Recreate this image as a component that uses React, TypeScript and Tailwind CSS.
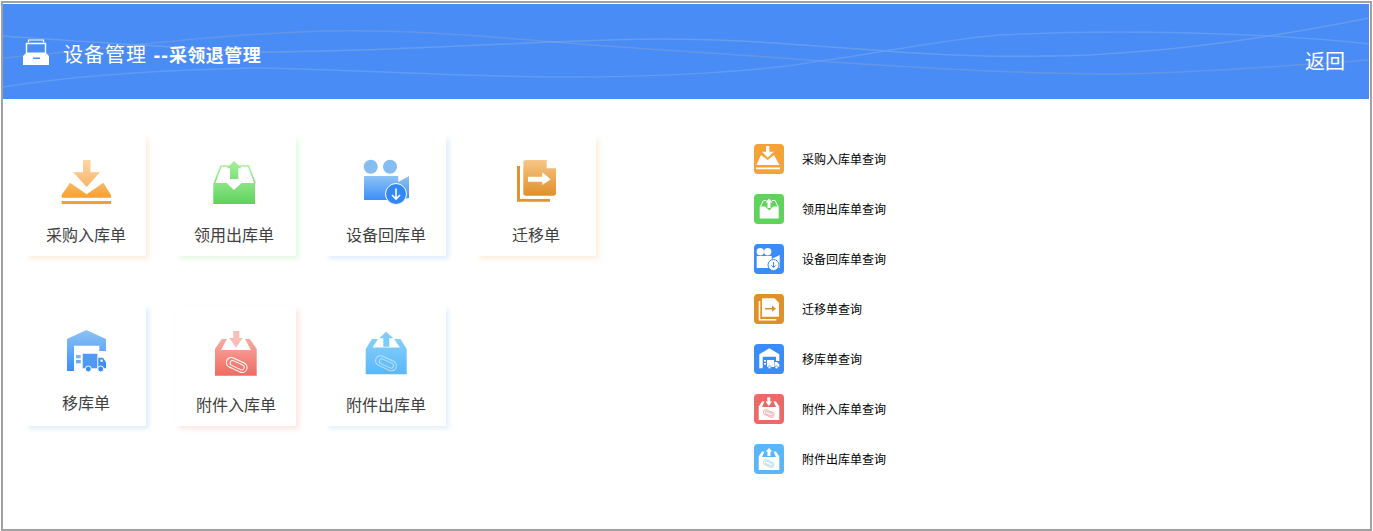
import type { ReactNode } from "react";

const cjk = "font-['Liberation_Sans','Noto_Sans_CJK_SC',sans-serif]";

function Grad({ id, from, to }: { id: string; from: string; to: string }) {
  return (
    <defs>
      <linearGradient id={id} x1="0" y1="0" x2="0" y2="1">
        <stop offset="0" stopColor={from} />
        <stop offset="1" stopColor={to} />
      </linearGradient>
    </defs>
  );
}

function Clip({ cx, cy, stroke = "#fff", w = 1, s = 1 }: { cx: number; cy: number; stroke?: string; w?: number; s?: number }) {
  return (
    <g transform={`rotate(25 ${cx} ${cy})`} fill="none" stroke={stroke} strokeWidth={w}>
      <rect x={cx - 11 * s} y={cy - 5 * s} width={22 * s} height={10 * s} rx={5 * s} />
      <rect x={cx - 7 * s} y={cy - 2.5 * s} width={15 * s} height={5 * s} rx={2.5 * s} />
    </g>
  );
}

function BigIcon({ box, children }: { box: string; children: ReactNode }) {
  return (
    <svg viewBox={box} className="w-16 h-14">
      {children}
    </svg>
  );
}

const bigIcons = {
  buy: (
    <BigIcon box="54 156 64 56">
      <Grad id="a1" from="#fdd6a6" to="#f8b568" />
      <Grad id="a2" from="#f9b763" to="#f5a033" />
      <path d="M83 160h7.5v12.3H100L86.7 187 73.3 172.3H83z" fill="url(#a1)" />
      <path d="M70 182.7l16.7 11.6 16.6-11.6 7.7 12.3v2.7H61.7V195z" fill="url(#a2)" />
      <rect x="61.7" y="201" width="49.3" height="3" fill="#f59f2e" />
    </BigIcon>
  ),
  use: (
    <BigIcon box="204 156 64 56">
      <Grad id="b1" from="#a8ee9c" to="#7fe07c" />
      <Grad id="b2" from="#8be484" to="#5ed25c" />
      <path d="M214.5 183l6.5-17h27.5l6.5 17" fill="none" stroke="url(#b1)" strokeWidth="1.6" />
      <path d="M234 161l7.7 7.3h-3.4V179h-8.3v-10.7h-3.3z" fill="url(#b1)" />
      <path d="M213.3 183h13.4l7.3 7 7.5-7H255v21h-41.7z" fill="url(#b2)" />
    </BigIcon>
  ),
  back: (
    <BigIcon box="354 156 64 56">
      <Grad id="c1" from="#8ec3f4" to="#3c8efb" />
      <circle cx="370.7" cy="166.7" r="7" fill="#85bdf3" />
      <circle cx="390" cy="166.7" r="7" fill="#85bdf3" />
      <path d="M364 176h34.3v6l10.7-6v22l-11 2h-34z" fill="url(#c1)" />
      <circle cx="396" cy="194" r="10.5" fill="#3288f5" stroke="#fff" strokeWidth="1" />
      <path d="M396 188.5v10M392 195l4 4 4-4" fill="none" stroke="#fff" strokeWidth="1.6" />
    </BigIcon>
  ),
  move: (
    <BigIcon box="504 156 64 56">
      <Grad id="d1" from="#f6c588" to="#e09029" />
      <path d="M517 166h3v33h30v2.7h-33z" fill="#e2952f" />
      <path d="M526 160h20.7l9.3 8.3V193a2.7 2.7 0 0 1-2.7 2.7H526a2.7 2.7 0 0 1-2.7-2.7V163a2.7 2.7 0 0 1 2.7-3z" fill="url(#d1)" />
      <path d="M546.7 160l9.3 8.3h-9.3z" fill="#fff" />
      <path d="M528 176.7h14.3v-4.4l8.4 7-8.4 5.7v-3.3H528z" fill="#fff" />
    </BigIcon>
  ),
  shift: (
    <BigIcon box="54 326 64 56">
      <Grad id="e1" from="#8ec3f4" to="#3c8efb" />
      <path d="M86.3 330L106 339v12h-6.7v-5.3H74V371h-7V339z" fill="url(#e1)" />
      <rect x="76" y="355" width="4.7" height="3.3" fill="#7db5f6" />
      <rect x="76" y="360" width="4.7" height="3.3" fill="#6aaaf7" />
      <rect x="82.7" y="353.7" width="14.6" height="14.6" rx="0.5" fill="#4f99f8" />
      <path d="M98.3 357.7h4.7l3 4.6v6h-7.7z" fill="#3c8efb" />
      <rect x="100.5" y="359.5" width="2.2" height="2.4" fill="#fff" />
      <circle cx="88.3" cy="369" r="3" fill="#3c8efb" stroke="#fff" strokeWidth="1" />
      <circle cx="100.7" cy="369" r="3" fill="#3c8efb" stroke="#fff" strokeWidth="1" />
    </BigIcon>
  ),
  partIn: (
    <BigIcon box="204 326 64 56">
      <Grad id="f1" from="#f9aaa2" to="#f06b60" />
      <path d="M233.3 331h6v7h3.4L236 347.7l-6.7-9.7h4z" fill="#fbbdb7" />
      <path d="M215 349l6.7-10h5.3l-6 11h30l-6-11h5l6.7 10v26.7H215z" fill="url(#f1)" />
      <Clip cx={236.7} cy={365} />
    </BigIcon>
  ),
  partOut: (
    <BigIcon box="354 326 64 56">
      <Grad id="g1" from="#85d0f8" to="#5ab6fb" />
      <path d="M386 331.7l7.3 6.6h-4v8.4h-6v-8.4h-4z" fill="#7fcdf7" />
      <path d="M365.7 349l6.3-10h6l-5.5 8.5H400l-6-8.5h6.5l6.2 10v25.3h-41z" fill="url(#g1)" />
      <Clip cx={386} cy={363.3} stroke="#b9e2fc" />
    </BigIcon>
  ),
};

const cards = [
  { label: "采购入库单", icon: bigIcons.buy, shadow: "shadow-[3px_3px_5px_#fdeedd]", text: "mt-3" },
  { label: "领用出库单", icon: bigIcons.use, shadow: "shadow-[3px_3px_5px_#e6f9e4]", text: "mt-3 pr-1" },
  { label: "设备回库单", icon: bigIcons.back, shadow: "shadow-[3px_3px_5px_#dfecfd]", text: "mt-3" },
  { label: "迁移单", icon: bigIcons.move, shadow: "shadow-[3px_3px_5px_#fdeedd]", text: "mt-3" },
  { label: "移库单", icon: bigIcons.shift, shadow: "shadow-[3px_3px_5px_#dfecfd]", text: "mt-2.5" },
  { label: "附件入库单", icon: bigIcons.partIn, shadow: "shadow-[3px_3px_5px_#fde6e4]", text: "mt-3" },
  { label: "附件出库单", icon: bigIcons.partOut, shadow: "shadow-[3px_3px_5px_#e3f1fb]", text: "mt-3" },
];

const links = [
  {
    label: "采购入库单查询",
    bg: "bg-[#f5a236]",
    glyph: (
      <g fill="#fff">
        <path d="M12 2h3.4v5.7h4.3L13.7 13.7 8 7.7h4z" />
        <path d="M7 11l6.7 5 6.3-5 5.5 10h-23z" />
        <rect x="2" y="23.5" width="24" height="1.8" />
      </g>
    ),
  },
  {
    label: "领用出库单查询",
    bg: "bg-[#5fd35a]",
    glyph: (
      <g fill="#fff">
        <path d="M6.5 12.5l3-6h3M24 12.5l-3-6h-3" fill="none" stroke="#fff" strokeWidth="1" />
        <path d="M15 4.5l3.5 4h-2V14h-3V8.5h-2z" />
        <path d="M5.7 12.5h5.5l4 4 4-4h5.5v12h-19z" />
      </g>
    ),
  },
  {
    label: "设备回库单查询",
    bg: "bg-[#3b8cfb]",
    glyph: (
      <g>
        <circle cx="6.3" cy="7.7" r="3.7" fill="#fff" />
        <circle cx="13.7" cy="7.7" r="3.7" fill="#fff" />
        <path d="M2.7 12h15v3l8-4v13h-23z" fill="#fff" />
        <circle cx="19.5" cy="21" r="5.5" fill="#fff" stroke="#3b8cfb" strokeWidth="1" />
        <path d="M19.5 18v5M17.5 21.5l2 2 2-2" fill="none" stroke="#3b8cfb" strokeWidth="1" />
      </g>
    ),
  },
  {
    label: "迁移单查询",
    bg: "bg-[#e09029]",
    glyph: (
      <g>
        <path d="M4.7 7h1.6v18h16v1.5H4.7z" fill="#fff" />
        <path d="M8 4.3h12.5l4.5 4.5v14H8z" fill="#fff" />
        <path d="M11 14h7v-2.5l4 3.2-4 3v-2.2h-7z" fill="#e09029" />
      </g>
    ),
  },
  {
    label: "移库单查询",
    bg: "bg-[#3b8cfb]",
    glyph: (
      <g>
        <path d="M15.3 4.3l10 6V17H22v-4.3H8.7V24.3H5.3V10.3z" fill="#fff" />
        <rect x="10" y="16" width="2" height="1.6" fill="#fff" />
        <rect x="10" y="19" width="2" height="1.6" fill="#fff" />
        <rect x="13" y="16" width="7" height="7" fill="#fff" />
        <path d="M20.5 18h2.5l2.3 2.5V23h-4.8z" fill="#fff" />
        <circle cx="15.5" cy="23.3" r="1.5" fill="#fff" stroke="#3b8cfb" strokeWidth="0.7" />
        <circle cx="22.5" cy="23.3" r="1.5" fill="#fff" stroke="#3b8cfb" strokeWidth="0.7" />
      </g>
    ),
  },
  {
    label: "附件入库单查询",
    bg: "bg-[#e96a66]",
    glyph: (
      <g>
        <path d="M13.3 3.3h3v4.2H18L14.8 12l-3.3-4.5h1.8z" fill="#fff" />
        <path d="M4.7 12.5l3.3-5h2.4L8 13h14l-2.5-5.5H22l3.3 5V26H4.7z" fill="#fff" />
        <Clip cx={14.7} cy={19.5} stroke="#f3b5b2" w={1} s={0.5} />
      </g>
    ),
  },
  {
    label: "附件出库单查询",
    bg: "bg-[#5ab6fb]",
    glyph: (
      <g>
        <path d="M15 4l3.2 3.5h-1.7V12h-3V7.5h-1.7z" fill="#fff" />
        <path d="M4.7 12.5l3.3-5h2.4L8 13h14l-2.5-5.5H22l3.3 5V26H4.7z" fill="#fff" />
        <Clip cx={14.7} cy={19.5} stroke="#b9e0fc" w={1} s={0.5} />
      </g>
    ),
  },
];

function Waves() {
  return (
    <svg viewBox="3 4 1367 95" preserveAspectRatio="none" className="absolute inset-0 w-full h-full" fill="none" strokeWidth="1.5">
      <path stroke="#8ea6d0" strokeOpacity="0.4" d="M3 58C100 50 200 35 323 31C400 29 480 36 556 42C650 50 740 54 820 61C920 68 1020 74 1120 74C1200 73 1300 65 1370 60" />
      <path stroke="#7faee8" strokeOpacity="0.5" d="M3 36C90 42 180 48 260 52C360 52 470 45 556 42C600 40 630 39 660 39C740 39 820 46 885 51C940 55 1000 57 1040 56C1090 56 1100 54 1120 53C1200 48 1290 34 1370 18" />
      <path stroke="#659ff2" strokeOpacity="0.8" d="M3 87C60 78 150 70 260 68C360 70 470 77 560 77C660 77 760 72 820 61C870 55 940 40 1000 35C1040 33 1080 32 1120 32C1200 32 1300 36 1370 44" />
    </svg>
  );
}

export default function App() {
  return (
    <div className={`h-screen bg-white px-px pt-px overflow-hidden ${cjk}`}>
      <div className="h-full border-2 border-neutral-400 pt-px pr-px">
        {/* Header */}
        <header className="relative h-24 bg-[#4a8cf5] border-b border-white text-white flex items-center justify-between pl-5 pr-6 pt-2">
          <Waves />
          <div className="relative flex items-center gap-3.5">
            <svg viewBox="0 0 26 26" className="w-6.5 h-6.5 -mt-2">
              <path d="M5.5 3.5V1h15v2.5" fill="none" stroke="#fff" strokeWidth="1.2" />
              <path d="M3.5 14V4.5h19V14" fill="none" stroke="#fff" strokeWidth="1.4" />
              <path d="M3.5 13.5h19L26 17v9H0v-9z M10 18.5v1.4h7v-1.4z" fill="#fff" fillRule="evenodd" />
            </svg>
            <h1 className="text-xl tracking-wider">
              设备管理 <span className="font-bold">--<span className="text-lg tracking-wide">采领退管理</span></span>
            </h1>
          </div>
          <a className="relative text-xl mt-3">返回</a>
        </header>

        <main className="flex pt-9">
          {/* Entry cards */}
          <div className="-ml-px pl-6 w-180 shrink-0">
            <div className="flex flex-wrap w-150 gap-x-7.5 gap-y-12.5">
              {cards.map((card) => (
                <button key={card.label} className={`w-30 h-30 bg-white flex flex-col items-center pt-5 ${card.shadow}`}>
                  {card.icon}
                  <span className={`text-base text-neutral-700 ${card.text}`}>{card.label}</span>
                </button>
              ))}
            </div>
          </div>

          {/* Query links */}
          <ul className="flex flex-col gap-5 pl-8 pt-2">
            {links.map((link) => (
              <li key={link.label} className="flex items-center gap-4.5">
                <span className={`w-7.5 h-7.5 rounded-sm ${link.bg}`}>
                  <svg viewBox="0 0 30 30" className="w-7.5 h-7.5">
                    {link.glyph}
                  </svg>
                </span>
                <span className="text-xs text-black mt-0.5">{link.label}</span>
              </li>
            ))}
          </ul>
        </main>
      </div>
    </div>
  );
}
